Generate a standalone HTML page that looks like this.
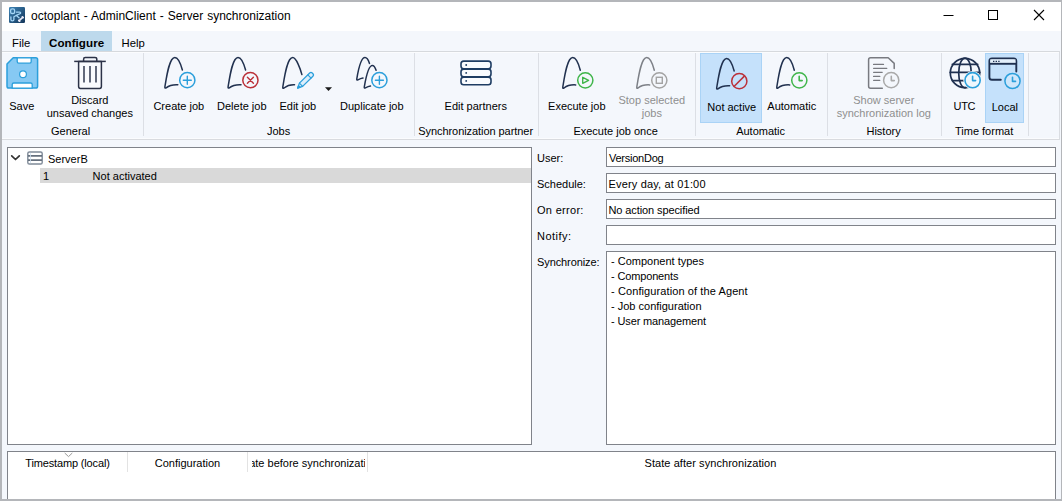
<!DOCTYPE html>
<html>
<head>
<meta charset="utf-8">
<title>octoplant - AdminClient - Server synchronization</title>
<style>
*{box-sizing:border-box;margin:0;padding:0}
html,body{width:1062px;height:501px;overflow:hidden;background:#f4f7fc}
body{font-family:"Liberation Sans",sans-serif;font-size:11px;color:#000;position:relative}
.abs{position:absolute}
.t{position:absolute;white-space:nowrap;line-height:13px}
.c{text-align:center}
#frameT{left:0;top:0;width:1062px;height:2px;background:#b4b6ba}
#frameL{left:0;top:0;width:2px;height:501px;background:#b4b6ba}
#frameB{left:0;top:499px;width:1062px;height:2px;background:#b4b6ba}
#frameR{left:1061px;top:0;width:1px;height:501px;background:#b4b6ba}
#titlebar{left:2px;top:2px;width:1059px;height:29px;background:#fff}
#menubar{left:2px;top:31px;width:1059px;height:20px;background:#f4f7fc}
#ribbon{left:2px;top:51px;width:1058px;height:89px;background:#f4f7fc;border-top:1px solid #d6d9dd;border-bottom:1px solid #d9dbdf;border-right:1px solid #dadde2;box-shadow:inset 0 1px 0 #fbfcfe, inset 0 -1px 0 #fbfcfe}
.sep{position:absolute;top:53px;width:1px;height:83px;background:#dcdfe5}
.glabel{top:124px;font-size:11px}
.panel{position:absolute;background:#fff;border:1px solid #80838a}
.gray{color:#8f8f8f}
.rl{transform:translateX(0.8px)}
.gl{transform:translateX(0.6px)}
</style>
</head>
<body>
<div class="abs" id="titlebar"></div>
<div class="abs" id="menubar"></div>
<div class="abs" id="ribbon"></div>

<!-- title -->
<div class="t" id="title" style="left:31px;top:9px;font-size:12px;line-height:14px;color:#000;letter-spacing:0.005px;word-spacing:0.65px">octoplant - AdminClient - Server synchronization</div>

<!-- menu -->
<div class="abs" style="left:41px;top:31px;width:71px;height:20px;background:#bdd9ec"></div>
<div class="t" id="mFile" style="left:12px;top:37px;font-size:11.3px">File</div>
<div class="t" id="mConf" style="left:49px;top:36px;font-weight:bold;font-size:11.6px;letter-spacing:0.05px">Configure</div>
<div class="t" id="mHelp" style="left:121.5px;top:37px;font-size:11.3px">Help</div>

<!-- panels -->
<div class="panel" id="pLeft" style="left:7px;top:147px;width:525px;height:298px"></div>
<div class="panel" id="pBottom" style="left:7px;top:451px;width:1049px;height:48px;border-bottom:none"></div>

<div class="panel" style="left:606px;top:147px;width:450px;height:20px"></div>
<div class="panel" style="left:606px;top:173px;width:450px;height:20px"></div>
<div class="panel" style="left:606px;top:199px;width:450px;height:20px"></div>
<div class="panel" style="left:606px;top:225px;width:450px;height:20px"></div>
<div class="panel" style="left:606px;top:251px;width:450px;height:194px"></div>


<!-- ribbon highlights -->
<div class="abs" style="left:700px;top:53px;width:62px;height:70px;background:#c5e1fb;border:1px solid #aad3f6"></div>
<div class="abs" style="left:985px;top:53px;width:39px;height:70px;background:#c5e1fb;border:1px solid #aad3f6"></div>

<!-- ribbon separators -->
<div class="sep" style="left:143px"></div>
<div class="sep" style="left:414px"></div>
<div class="sep" style="left:538px"></div>
<div class="sep" style="left:695px"></div>
<div class="sep" style="left:827px"></div>
<div class="sep" style="left:941px"></div>
<div class="sep" style="left:1028px"></div>

<!-- ribbon button labels -->
<div class="t c rl" style="left:-29px;width:100px;top:100px">Save</div>
<div class="t c rl" style="left:39px;width:100px;top:94px">Discard<br>unsaved changes</div>
<div class="t c rl" style="left:128px;width:100px;top:100px">Create job</div>
<div class="t c rl" style="left:191px;width:100px;top:100px">Delete job</div>
<div class="t c rl" style="left:247px;width:100px;top:100px">Edit job</div>
<div class="t c rl" style="left:321px;width:100px;top:100px">Duplicate job</div>
<div class="t c rl" style="left:425px;width:100px;top:100px">Edit partners</div>
<div class="t c rl" style="left:526px;width:100px;top:100px">Execute job</div>
<div class="t c rl gray" style="left:601px;width:100px;top:94px">Stop selected<br>jobs</div>
<div class="t c rl" style="left:681px;width:100px;top:101px">Not active</div>
<div class="t c rl" style="left:741px;width:100px;top:100px">Automatic</div>
<div class="t c rl gray" style="left:813px;width:140px;top:94px">Show server<br>synchronization log</div>
<div class="t c rl" style="left:913.5px;width:100px;top:100px;letter-spacing:-0.4px">UTC</div>
<div class="t c rl" style="left:954px;width:100px;top:101px">Local</div>

<!-- group labels -->
<div class="t c gl" style="left:20px;width:100px;top:125px">General</div>
<div class="t c gl" style="left:228px;width:100px;top:125px">Jobs</div>
<div class="t c gl" style="left:400px;width:150px;top:125px;letter-spacing:-0.06px">Synchronization partner</div>
<div class="t c gl" style="left:540px;width:150px;top:125px">Execute job once</div>
<div class="t c gl" style="left:710px;width:100px;top:125px">Automatic</div>
<div class="t c gl" style="left:833px;width:100px;top:125px">History</div>
<div class="t c gl" style="left:933.5px;width:100px;top:125px">Time format</div>

<!-- tree -->
<div class="abs" style="left:40px;top:168px;width:491px;height:15px;background:#d9d9d9"></div>
<div class="t" style="left:48px;top:153px">ServerB</div>
<div class="t" style="left:43px;top:170px">1</div>
<div class="t" style="left:92.6px;top:170px">Not activated</div>

<!-- form labels -->
<div class="t" style="left:537px;top:152px">User:</div>
<div class="t" style="left:537px;top:178px">Schedule:</div>
<div class="t" style="left:537px;top:204px;letter-spacing:0.3px">On error:</div>
<div class="t" style="left:537px;top:230px;letter-spacing:0.5px">Notify:</div>
<div class="t" style="left:537px;top:256px;letter-spacing:-0.1px">Synchronize:</div>

<!-- form values -->
<div class="t" style="left:609px;top:152px;letter-spacing:-0.25px">VersionDog</div>
<div class="t" style="left:608.5px;top:178px;letter-spacing:0.17px">Every day, at 01:00</div>
<div class="t" style="left:608.5px;top:204px;letter-spacing:-0.1px">No action specified</div>
<div class="t" style="left:611px;top:254px;line-height:15px">- Component types<br><span style="letter-spacing:-0.15px">- Components</span><br><span style="letter-spacing:0.1px">- Configuration of the Agent</span><br>- Job configuration<br><span style="letter-spacing:-0.13px">- User management</span></div>

<!-- bottom grid header -->
<div class="abs" style="left:127px;top:452px;width:1px;height:20px;background:#e3e3e3"></div>
<div class="abs" style="left:247px;top:452px;width:1px;height:20px;background:#e3e3e3"></div>
<div class="abs" style="left:367px;top:452px;width:1px;height:20px;background:#e3e3e3"></div>
<div class="t c" style="left:8px;width:119px;top:457px;letter-spacing:-0.15px">Timestamp (local)</div>
<div class="t c" style="left:128px;width:119px;top:457px">Configuration</div>
<div class="abs" style="left:252px;top:452px;width:113px;height:20px;overflow:hidden"><div class="t c" style="left:-41px;width:195px;top:5px">State before synchronization</div></div>
<div class="t c" style="left:367px;width:687px;top:457px;letter-spacing:0.06px">State after synchronization</div>

<svg class="abs" id="icons" style="left:0;top:0" width="1062" height="501" viewBox="0 0 1062 501" fill="none">
<path d="M 13.2,57.8 H 35.8 Q 37.6,57.8 37.6,59.6 V 86.3 Q 37.6,88.1 35.8,88.1 H 8.8 Q 7,88.1 7,86.3 V 64 Z" fill="#86c9f3" stroke="#2b9fdb" stroke-width="1.5" stroke-linejoin="round"/>
<path d="M 17.2,57.8 H 31.2 V 61.6 Q 31.2,63.2 29.6,63.2 H 18.8 Q 17.2,63.2 17.2,61.6 Z" fill="#fff" stroke="#2b9fdb" stroke-width="1.3"/>
<circle cx="23" cy="74.2" r="3.4" fill="#fff" stroke="#2b9fdb" stroke-width="1.2"/>
<path d="M 12.2,88.1 V 84.6 Q 12.2,83 13.8,83 H 30.6 Q 32.2,83 32.2,84.6 V 88.1 Z" fill="#fff" stroke="#2b9fdb" stroke-width="1.3"/>
<path d="M 78.6,61.4 V 86.6 Q 78.6,88.4 80.4,88.4 H 99.6 Q 101.4,88.4 101.4,86.6 V 61.4 Z" fill="#f9fbfe" stroke="#2b3247" stroke-width="1.5" stroke-linejoin="round"/>
<path d="M 74.2,61.4 H 105.8" stroke="#2b3247" stroke-width="1.5"/>
<path d="M 83.6,61.4 V 59.2 Q 83.6,57.5 85.3,57.5 H 95 Q 96.8,57.5 96.8,59.2 V 61.4" stroke="#2b3247" stroke-width="1.5"/>
<path d="M 84,66 V 82.5 M 90,66 V 82.5 M 96,66 V 82.5" stroke="#5b6376" stroke-width="1.9"/>
<path transform="translate(164.8,88)" d="M 17.6,-18.0 C 16.0,-24.0 13.5,-30.6 10,-30.6 C 4.6,-30.6 2,-13 0.1,-1.2 Q -0.2,0.7 1.3,-0.2 C 4,-2.3 8,-3.6 13.0,-3.3" stroke="#21314f" stroke-width="1.5" stroke-linecap="round" stroke-linejoin="round"/>
<circle cx="187.3" cy="80.2" r="7.6" stroke="#2b9fdb" stroke-width="1.5" fill="none"/>
<path d="M 183.3,80.2 H 191.3 M 187.3,76.2 V 84.2" stroke="#2b9fdb" stroke-width="1.4" stroke-linecap="round"/>
<path transform="translate(228,88)" d="M 17.6,-18.0 C 16.0,-24.0 13.5,-30.6 10,-30.6 C 4.6,-30.6 2,-13 0.1,-1.2 Q -0.2,0.7 1.3,-0.2 C 4,-2.3 8,-3.6 13.0,-3.3" stroke="#21314f" stroke-width="1.5" stroke-linecap="round" stroke-linejoin="round"/>
<circle cx="250.4" cy="80.2" r="7.6" stroke="#bb3038" stroke-width="1.5" fill="none"/>
<path d="M 247.4,77.2 L 253.4,83.2 M 253.4,77.2 L 247.4,83.2" stroke="#bb3038" stroke-width="1.4" stroke-linecap="round"/>
<path transform="translate(282.7,88.2)" d="M 19.2,-13.6 C 17.599999999999998,-19.6 13.5,-30.6 10,-30.6 C 4.6,-30.6 2,-13 0.1,-1.2 Q -0.2,0.7 1.3,-0.2 C 4,-2.3 8,-3.6 11.8,-3.4" stroke="#21314f" stroke-width="1.5" stroke-linecap="round" stroke-linejoin="round"/>
<g transform="translate(297.6,88.1) rotate(-44.5)" stroke="#2b9fdb" stroke-width="1.25" stroke-linejoin="round" stroke-linecap="round"><path d="M 0,0 L 4.8,-2.3 H 19.2 Q 21,-2.3 21,-0.5 V 0.5 Q 21,2.3 19.2,2.3 H 4.8 Z" fill="#dceefb"/><path d="M 4.8,-2.3 V 2.3 M 16.6,-2.3 V 2.3" stroke-width="1.1"/><path d="M 0,0 L 2.4,-1.15 V 1.15 Z" fill="#2b9fdb"/></g>
<path d="M 325,87.3 H 332 L 328.5,91 Z" fill="#1a1a1a"/>
<path transform="translate(356.7,80)" d="M 12.8,-16.6 C 11.7,-19.8 10.4,-22.4 8.3,-22.4 C 3.9,-22.4 1.4,-9 0.1,-1.1 Q -0.2,0.6 1.2,-0.1 C 2.8,-0.9 4.5,-1.6 6.3,-1.9" stroke="#21314f" stroke-width="1.5" stroke-linecap="round" stroke-linejoin="round"/>
<path transform="translate(364.2,88)" d="M 11.9,-17.8 C 11,-20.4 10.1,-22.6 8.2,-22.6 C 3.8,-22.6 1.4,-9 0.1,-1.1 Q -0.2,0.6 1.2,-0.1 C 2.8,-0.9 4.5,-1.6 6.3,-1.9" stroke="#21314f" stroke-width="1.5" stroke-linecap="round" stroke-linejoin="round"/>
<circle cx="379.4" cy="80.2" r="7.6" stroke="#2b9fdb" stroke-width="1.5" fill="none"/>
<path d="M 375.4,80.2 H 383.4 M 379.4,76.2 V 84.2" stroke="#2b9fdb" stroke-width="1.4" stroke-linecap="round"/>
<rect x="461" y="61.1" width="30" height="7.7" rx="2.7" fill="#f9fbfe" stroke="#1f3d63" stroke-width="1.6"/><rect x="461" y="69.1" width="30" height="7.7" rx="2.7" fill="#f9fbfe" stroke="#1f3d63" stroke-width="1.6"/><rect x="461" y="77.1" width="30" height="7.7" rx="2.7" fill="#f9fbfe" stroke="#1f3d63" stroke-width="1.6"/>

<circle cx="466.2" cy="65" r="0.95" fill="#1f3d63"/><circle cx="466.2" cy="72.9" r="0.95" fill="#1f3d63"/><circle cx="466.2" cy="80.9" r="0.95" fill="#1f3d63"/>
<path transform="translate(562.7,88.2)" d="M 17.6,-18.0 C 16.0,-24.0 13.5,-30.6 10,-30.6 C 4.6,-30.6 2,-13 0.1,-1.2 Q -0.2,0.7 1.3,-0.2 C 4,-2.3 8,-3.6 13.0,-3.3" stroke="#21314f" stroke-width="1.5" stroke-linecap="round" stroke-linejoin="round"/>
<circle cx="585.3" cy="80.3" r="7.6" stroke="#3fb54a" stroke-width="1.5" fill="none"/>
<path d="M 582.7,77.3 V 83.3 L 588.6,80.3 Z" stroke="#3fb54a" stroke-width="1.4" stroke-linejoin="round"/>
<path transform="translate(636.7,88.2)" d="M 17.6,-18.0 C 16.0,-24.0 13.5,-30.6 10,-30.6 C 4.6,-30.6 2,-13 0.1,-1.2 Q -0.2,0.7 1.3,-0.2 C 4,-2.3 8,-3.6 13.0,-3.3" stroke="#7d8087" stroke-width="1.5" stroke-linecap="round" stroke-linejoin="round"/>
<circle cx="659.3" cy="80.3" r="7.6" stroke="#a3a3a3" stroke-width="1.5" fill="none"/>
<rect x="656.3" y="77.3" width="6" height="6" stroke="#a3a3a3" stroke-width="1.4"/>
<path transform="translate(716.6,89)" d="M 17.6,-18.0 C 16.0,-24.0 13.5,-30.6 10,-30.6 C 4.6,-30.6 2,-13 0.1,-1.2 Q -0.2,0.7 1.3,-0.2 C 4,-2.3 8,-3.6 13.0,-3.3" stroke="#21314f" stroke-width="1.5" stroke-linecap="round" stroke-linejoin="round"/>
<circle cx="739.3" cy="81.2" r="7.6" stroke="#bb3038" stroke-width="1.5" fill="none"/>
<path d="M 734,86.5 L 744.6,75.9" stroke="#bb3038" stroke-width="1.5"/>
<path transform="translate(776.7,88.2)" d="M 17.6,-18.0 C 16.0,-24.0 13.5,-30.6 10,-30.6 C 4.6,-30.6 2,-13 0.1,-1.2 Q -0.2,0.7 1.3,-0.2 C 4,-2.3 8,-3.6 13.0,-3.3" stroke="#21314f" stroke-width="1.5" stroke-linecap="round" stroke-linejoin="round"/>
<circle cx="799.3" cy="80.3" r="7.6" stroke="#3fb54a" stroke-width="1.5" fill="none"/>
<path d="M 799.2,76.4 V 80.60000000000001 H 802.2" stroke="#3fb54a" stroke-width="1.6" stroke-linecap="round" stroke-linejoin="round"/>
<path d="M 882.3,88.2 H 870.6 Q 868.6,88.2 868.6,86.2 V 59.7 Q 868.6,57.7 870.6,57.7 H 888.2 L 894.2,63.4 V 68.4" stroke="#787a80" stroke-width="1.5" stroke-linecap="round" stroke-linejoin="round"/>
<path d="M 873.6,64.4 H 883.5 M 873.6,68.3 H 886.8 M 873.6,72.3 H 882.2 M 873.6,76.4 H 879.8 M 873.6,80.3 H 879.8" stroke="#787a80" stroke-width="1.3" stroke-linecap="round"/>
<circle cx="891.2" cy="80.2" r="7.6" stroke="#a9a9a9" stroke-width="1.5" fill="none"/>
<path d="M 891.3,76.4 V 80.60000000000001 H 894.3" stroke="#a9a9a9" stroke-width="1.6" stroke-linecap="round" stroke-linejoin="round"/>
<g stroke="#1f3050" stroke-width="1.7" stroke-linecap="round"><circle cx="965" cy="73" r="14.7"/><ellipse cx="965" cy="73" rx="6.3" ry="14.8"/><path d="M 952.3,64.3 H 977.7 M 950.2,72.3 H 979.8 M 952.3,80.6 H 977.7"/></g>
<circle cx="972.6" cy="80.2" r="9.2" fill="#f4f7fc"/><circle cx="972.6" cy="80.2" r="7.6" stroke="#2b9fdb" stroke-width="1.6" fill="#eef7fd"/>
<path d="M 972.6,76.4 V 80.60000000000001 H 975.6" stroke="#2b9fdb" stroke-width="1.6" stroke-linecap="round" stroke-linejoin="round"/>
<path d="M 1000.8,79.8 H 992 Q 989.4,79.8 989.4,77.2 V 61.1 Q 989.4,58.5 992,58.5 H 1013.7 Q 1016.3,58.5 1016.3,61.1 V 71.6" stroke="#1f3050" stroke-width="1.9" stroke-linecap="round" stroke-linejoin="round" fill="none"/>
<path d="M 990.2,59.3 H 1015.5 V 63 H 990.2 Z" fill="#e4f0fb" stroke="none"/>
<path d="M 989.4,63.8 H 1016.3" stroke="#1f3050" stroke-width="1.9"/>
<path d="M 993,61.3 H 999.6" stroke="#1f3050" stroke-width="1.3" stroke-dasharray="1.4 1.2"/>
<circle cx="1012.5" cy="81" r="7.6" stroke="#2b9fdb" stroke-width="1.5" fill="#cfe7fb"/>
<path d="M 1012.5,77.2 V 81.4 H 1015.5" stroke="#2b9fdb" stroke-width="1.6" stroke-linecap="round" stroke-linejoin="round"/>
<path d="M 11.7,155.8 L 15.5,159.5 L 19.3,155.8" stroke="#333" stroke-width="1.7" stroke-linecap="round" stroke-linejoin="round"/>
<rect x="27.8" y="152" width="14.4" height="12" rx="1.6" fill="#fff" stroke="#7f8a98" stroke-width="1.4"/>
<path d="M 28,155.9 H 42 M 28,160.1 H 42" stroke="#65707e" stroke-width="1.6"/>
<path d="M 30.5,152.8 V 163.2" stroke="#cfe0ef" stroke-width="0.8"/>
<path d="M 64.7,453 L 68.5,456.6 L 72.3,453" stroke="#9a9a9a" stroke-width="1" />
<path d="M 943.5,15.5 H 953.5" stroke="#000" stroke-width="1"/>
<rect x="988.5" y="10.5" width="9" height="9" stroke="#000" stroke-width="1"/>
<path d="M 1034,10 L 1044,20 M 1044,10 L 1034,20" stroke="#000" stroke-width="1.1"/>
<defs><linearGradient id="ag" x1="0" y1="0" x2="1" y2="1"><stop offset="0" stop-color="#3d83b5"/><stop offset="1" stop-color="#14365a"/></linearGradient></defs>
<rect x="9" y="7" width="16" height="16" rx="1.2" fill="url(#ag)"/>
<g stroke="#a6d6f7" stroke-width="1.3" fill="none" stroke-linecap="round" stroke-linejoin="round"><rect x="10.6" y="8.8" width="4" height="4.7" rx="1.6"/><path d="M 16.3,12.1 H 19.6 Q 21,12.3 20.4,13.5 L 16.4,15.4 L 19.2,17.9"/><path d="M 10.9,16.8 V 19.4 Q 10.9,20.8 12.4,20.8 Q 13.9,20.8 13.9,19.4 V 16.8 L 16.2,15.5"/></g>
<path d="M 19.2,20.6 L 22.7,17.3" stroke="#e9e9f7" stroke-width="1.6" stroke-linecap="round"/>
<circle cx="18.8" cy="20.4" r="0.9" fill="#e9e9f7"/><circle cx="19.6" cy="21.2" r="0.9" fill="#e9e9f7"/><circle cx="22.4" cy="16.8" r="0.9" fill="#e9e9f7"/><circle cx="23.1" cy="17.6" r="0.9" fill="#e9e9f7"/>
</svg>
<div class="abs" id="frameT"></div>
<div class="abs" id="frameL"></div>
<div class="abs" id="frameB"></div>
<div class="abs" id="frameR"></div>
</body>
</html>
